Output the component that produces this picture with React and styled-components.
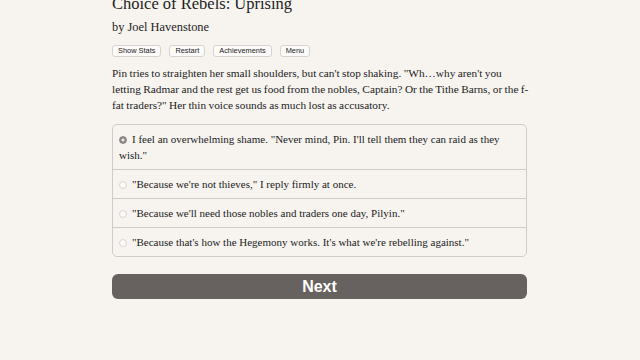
import React, { useState } from 'react'
import styled, { createGlobalStyle } from 'styled-components'

const Global = createGlobalStyle`
  html, body { margin: 0; padding: 0; background: #f7f4f0; }
  body { font-family: "Liberation Serif", "DejaVu Serif", serif; color: #222; }
`

const choices = [
  'I feel an overwhelming shame. "Never mind, Pin. I\'ll tell them they can raid as they wish."',
  '"Because we\'re not thieves," I reply firmly at once.',
  '"Because we\'ll need those nobles and traders one day, Pilyin."',
  '"Because that\'s how the Hegemony works. It\'s what we\'re rebelling against."',
]

export default function App() {
  const [picked, setPicked] = useState(0)
  return (
    <Page>
      <Global />
      <Column>
        <Title>Choice of Rebels: Uprising</Title>
        <Author>by Joel Havenstone</Author>
        <Buttons>
          <SmallButton>Show Stats</SmallButton>
          <SmallButton>Restart</SmallButton>
          <SmallButton>Achievements</SmallButton>
          <SmallButton>Menu</SmallButton>
        </Buttons>
        <Story>
          Pin tries to straighten her small shoulders, but can't stop shaking. "Wh…why aren't you<br />
          letting Radmar and the rest get us food from the nobles, Captain? Or the Tithe Barns, or the f-<br />
          fat traders?" Her thin voice sounds as much lost as accusatory.
        </Story>
        <Options>
          {choices.map((c, i) => (
            <Option key={i} onClick={() => setPicked(i)}>
              <Radio checked={picked === i} />
              {c}
            </Option>
          ))}
        </Options>
        <NextButton>Next</NextButton>
      </Column>
    </Page>
  )
}

const Page = styled.div`
  width: 640px;
  height: 360px;
  overflow: hidden;
`

const Column = styled.div`
  width: 415px;
  margin: -8px 0 0 112px;
  display: flex;
  flex-direction: column;
`

const Title = styled.h1`
  margin: 0;
  font-size: 16.5px;
  font-weight: normal;
  line-height: 24px;
  color: #222;
`

const Author = styled.div`
  margin-top: 2px;
  font-size: 12.4px;
  line-height: 18px;
  color: #222;
`

const Buttons = styled.div`
  display: flex;
  gap: 8px;
  margin-top: 9px;
`

const SmallButton = styled.button`
  font-family: "Liberation Sans", Arial, sans-serif;
  font-size: 7.4px;
  line-height: 10px;
  padding: 0 5px;
  background: #fcfbfa;
  border: 1px solid #d6d3d0;
  border-radius: 3px;
  color: #222;
`

const Story = styled.p`
  margin: 8px -20px 0 0;
  font-size: 11.3px;
  word-spacing: -0.4px;
  line-height: 16px;
  white-space: nowrap;
  color: #222;
`

const Options = styled.div`
  margin-top: 11px;
  border: 1px solid #cfcbc7;
  border-radius: 5px;
  display: flex;
  flex-direction: column;
  overflow: hidden;
`

const Option = styled.div`
  padding: 6px 14px 6px 6px;
  font-size: 11px;
  line-height: 16px;
  color: #222;
  cursor: pointer;
  & + & { border-top: 1px solid #cfcbc7; }
`

const Radio = styled.span`
  display: inline-block;
  box-sizing: border-box;
  width: 8px;
  height: 8px;
  margin: 0 5px 0 0;
  border-radius: 50%;
  vertical-align: -1px;
  border: 1px solid ${p => (p.checked ? '#8a8785' : '#d8d5d2')};
  background: ${p => (p.checked ? 'radial-gradient(circle, #ecebea 0 1.2px, #8a8785 1.8px)' : '#fbfaf9')};
`

const NextButton = styled.button`
  margin-top: 17px;
  height: 25px;
  border: none;
  border-radius: 6px;
  background: #67625f;
  color: #fff;
  font-family: "Liberation Sans", Arial, sans-serif;
  font-weight: bold;
  font-size: 16px;
`
